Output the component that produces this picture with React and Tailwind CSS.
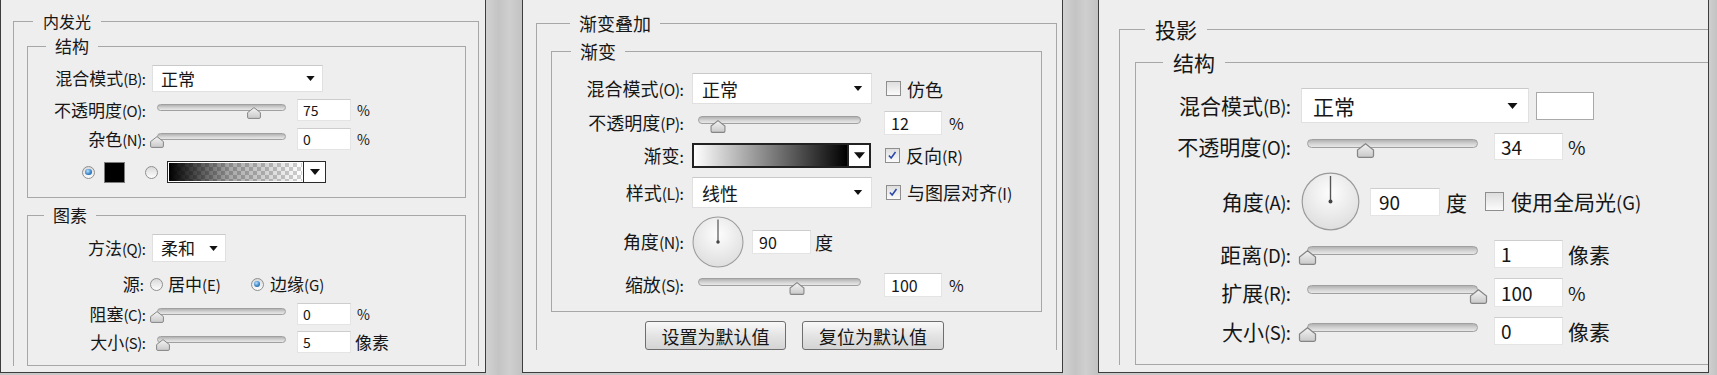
import React from "react";

const FONT = "font-['Noto_Sans_CJK_SC','Noto_Sans',sans-serif]";

function Label({ zh, en, className }) {
  return (
    <span className={`shrink-0 whitespace-nowrap text-right ${className}`}>
      {zh}
      {en ? <span className="text-[0.88em] tracking-[-0.03em]">{en}</span> : null}
      <span className="text-[0.88em]">:</span>
    </span>
  );
}

function Tri({ className }) {
  return (
    <svg viewBox="0 0 10 6" className={className}>
      <path d="M0 0H10L5 6Z" fill="#111" />
    </svg>
  );
}

function Select({ value, className, triClass }) {
  return (
    <div
      className={`flex shrink-0 items-center justify-between border border-[#e0e0e0] border-t-[#c9c9c9] bg-white ${className}`}
    >
      <span>{value}</span>
      <Tri className={triClass} />
    </div>
  );
}

function Field({ value, className }) {
  return (
    <div
      className={`flex shrink-0 items-center border border-[#e4e4e4] border-t-[#cdcdcd] bg-white ${className}`}
    >
      {value}
    </div>
  );
}

// thumb centre sits on the track at pos %, so it hangs over both ends
function Slider({ className, pos, trackClass, thumbW, thumbH }) {
  return (
    <div className={`relative shrink-0 ${className}`}>
      <div
        className={`rounded-full border border-[#a0a0a0] bg-[linear-gradient(#b2b2b2,#d4d4d4_55%,#e8e8e8)] ${trackClass}`}
      />
      <svg
        viewBox="0 0 14 12"
        className="absolute"
        style={{
          width: thumbW,
          height: thumbH,
          left: `calc(${pos}% - ${thumbW / 2}px)`,
          top: "45%",
        }}
      >
        <defs>
          <linearGradient id="thumbFill" x1="0" y1="0" x2="0" y2="1">
            <stop offset="0" stopColor="#f4f4f4" />
            <stop offset="1" stopColor="#c9c9c9" />
          </linearGradient>
        </defs>
        <path
          d="M7 0.6L13.4 5.6V10.2Q13.4 11.4 12.2 11.4H1.8Q0.6 11.4 0.6 10.2V5.6Z"
          fill="url(#thumbFill)"
          stroke="#858585"
          strokeWidth="1"
        />
      </svg>
    </div>
  );
}

function Radio({ on, className }) {
  return (
    <span
      className={`flex shrink-0 items-center justify-center rounded-full border border-[#8f8f8f] bg-[linear-gradient(#d9d9d9,#fdfdfd)] ${className}`}
    >
      {on ? (
        <span className="h-[55%] w-[55%] rounded-full bg-[radial-gradient(circle_at_40%_35%,#b9e1ff,#3a86c8_55%,#1d4f86)]" />
      ) : null}
    </span>
  );
}

function Check({ on, className }) {
  return (
    <span
      className={`flex shrink-0 items-center justify-center border border-[#8e8e8e] bg-[linear-gradient(#dedede,#fbfbfb)] ${className}`}
    >
      {on ? (
        <svg viewBox="0 0 12 12" className="h-[80%] w-[80%]">
          <path d="M2.2 6.4L4.8 9.2L9.8 2.4" fill="none" stroke="#2b47a8" strokeWidth="1.8" />
        </svg>
      ) : null}
    </span>
  );
}

function Dial({ className }) {
  return (
    <svg viewBox="0 0 60 60" className={`shrink-0 ${className}`}>
      <defs>
        <radialGradient id="dialFill" cx="0.5" cy="0.35" r="0.7">
          <stop offset="0" stopColor="#fdfdfd" />
          <stop offset="1" stopColor="#dcdcdc" />
        </radialGradient>
      </defs>
      <circle cx="30" cy="30" r="28.8" fill="url(#dialFill)" stroke="#9a9a9a" strokeWidth="1.2" />
      <line x1="30" y1="30" x2="30" y2="4" stroke="#555" strokeWidth="1.4" />
      <circle cx="30" cy="30" r="2" fill="#444" />
    </svg>
  );
}

function GlowPanel() {
  return (
    <section className="h-[373px] w-[486px] shrink-0 overflow-hidden border-x border-b border-[#3d3d3d] bg-[#eeeeee] pt-[11px] text-[17px] leading-[20px]">
      <fieldset className="ml-[12px] w-[466px] border border-b-0 border-[#a7a7a7]">
        <legend className="ml-[19px] px-[10px] text-[16px] leading-[20px]">内发光</legend>

        <fieldset className="ml-[13px] mt-[5px] w-[439px] border border-[#a7a7a7] pb-[14px]">
          <legend className="ml-[18px] px-[9px] leading-[20px]">结构</legend>

          <div className="mt-[9px] flex h-[27px] items-center">
            <Label zh="混合模式" en="(B)" className="w-[118px]" />
            <Select value="正常" className="ml-[6px] h-[27px] w-[171px] pl-[8px] pr-[7px]" triClass="h-[5px] w-[9px]" />
          </div>

          <div className="mt-[7px] flex h-[22px] items-center">
            <Label zh="不透明度" en="(O)" className="w-[118px]" />
            <Slider className="ml-[11px] -mt-[5px] h-[7px] w-[129px]" trackClass="h-[7px]" pos={75} thumbW={14} thumbH={12} />
            <Field value="75" className="ml-[11px] h-[22px] w-[54px] pl-[5px] text-[14px]" />
            <span className="ml-[6px] text-[14px]">%</span>
          </div>

          <div className="mt-[7px] flex h-[22px] items-center">
            <Label zh="杂色" en="(N)" className="w-[118px]" />
            <Slider className="ml-[11px] -mt-[5px] h-[7px] w-[129px]" trackClass="h-[7px]" pos={0} thumbW={14} thumbH={12} />
            <Field value="0" className="ml-[11px] h-[22px] w-[54px] pl-[5px] text-[14px]" />
            <span className="ml-[6px] text-[14px]">%</span>
          </div>

          <div className="mt-[11px] flex h-[22px] items-center">
            <Radio on className="ml-[54px] h-[13px] w-[13px]" />
            <span className="ml-[9px] h-[21px] w-[21px] border border-[#7c7c7c] bg-black" />
            <Radio className="ml-[20px] h-[13px] w-[13px]" />
            <div className="ml-[9px] flex h-[22px] w-[159px] border border-[#2a2a2a]">
              <div className="flex-1 border border-white bg-[linear-gradient(to_right,#000,rgba(0,0,0,0.35)_45%,rgba(0,0,0,0)),conic-gradient(#cfcfcf_25%,#ffffff_0_50%,#cfcfcf_0_75%,#ffffff_0)] bg-[length:100%_100%,8px_8px]" />
              <div className="flex w-[22px] items-center justify-center border-l border-[#2a2a2a] bg-white">
                <Tri className="h-[6px] w-[10px]" />
              </div>
            </div>
          </div>
        </fieldset>

        <fieldset className="ml-[13px] mt-[7px] w-[439px] border border-[#a7a7a7] pb-[12px]">
          <legend className="ml-[16px] px-[9px] leading-[20px]">图素</legend>

          <div className="mt-[9px] flex h-[28px] items-center">
            <Label zh="方法" en="(Q)" className="w-[118px]" />
            <Select value="柔和" className="ml-[6px] h-[28px] w-[74px] pl-[8px] pr-[7px]" triClass="h-[5px] w-[9px]" />
          </div>

          <div className="mt-[12px] flex h-[20px] items-center">
            <Label zh="源" className="w-[116px]" />
            <Radio className="ml-[6px] h-[13px] w-[13px]" />
            <span className="ml-[5px]">
              居中<span className="text-[0.88em]">(E)</span>
            </span>
            <Radio on className="ml-[30px] h-[13px] w-[13px]" />
            <span className="ml-[6px]">
              边缘<span className="text-[0.88em]">(G)</span>
            </span>
          </div>

          <div className="mt-[9px] flex h-[22px] items-center">
            <Label zh="阻塞" en="(C)" className="w-[118px]" />
            <Slider className="ml-[11px] -mt-[5px] h-[7px] w-[129px]" trackClass="h-[7px]" pos={0} thumbW={14} thumbH={12} />
            <Field value="0" className="ml-[11px] h-[22px] w-[54px] pl-[5px] text-[14px]" />
            <span className="ml-[6px] text-[14px]">%</span>
          </div>

          <div className="mt-[6px] flex h-[22px] items-center">
            <Label zh="大小" en="(S)" className="w-[118px]" />
            <Slider className="ml-[11px] -mt-[5px] h-[7px] w-[129px]" trackClass="h-[7px]" pos={4.6} thumbW={14} thumbH={12} />
            <Field value="5" className="ml-[11px] h-[22px] w-[54px] pl-[5px] text-[14px]" />
            <span className="ml-[4px]">像素</span>
          </div>
        </fieldset>
      </fieldset>
    </section>
  );
}

function GradientPanel() {
  return (
    <section className="h-[373px] w-[541px] shrink-0 overflow-hidden border-x border-b border-[#3d3d3d] bg-[#eeeeee] pt-[13px] text-[18px] leading-[20px]">
      <fieldset className="ml-[13px] w-[521px] border border-b-0 border-[#a7a7a7]">
        <legend className="ml-[33px] px-[9px] leading-[20px]">渐变叠加</legend>

        <fieldset className="ml-[14px] mt-[8px] w-[491px] border border-[#a7a7a7] pb-[14px]">
          <legend className="ml-[19px] px-[9px] leading-[20px]">渐变</legend>

          <div className="mt-[12px] flex h-[31px] items-center">
            <Label zh="混合模式" en="(O)" className="w-[132px]" />
            <Select value="正常" className="ml-[8px] h-[31px] w-[180px] pl-[9px] pr-[8px]" triClass="h-[5px] w-[10px]" />
            <Check className="ml-[14px] h-[15px] w-[15px]" />
            <span className="ml-[6px]">仿色</span>
          </div>

          <div className="mt-[7px] flex h-[24px] items-center">
            <Label zh="不透明度" en="(P)" className="w-[132px]" />
            <Slider className="ml-[14px] -mt-[6px] h-[8px] w-[163px]" trackClass="h-[8px]" pos={12} thumbW={16} thumbH={13} />
            <Field value="12" className="ml-[23px] h-[24px] w-[58px] pl-[6px] text-[16px]" />
            <span className="ml-[7px] text-[16px]">%</span>
          </div>

          <div className="mt-[8px] flex h-[25px] items-center">
            <Label zh="渐变" className="w-[132px]" />
            <div className="ml-[8px] flex h-[25px] w-[179px] border-2 border-[#222]">
              <div className="flex-1 bg-[linear-gradient(to_right,#ffffff,#000000)]" />
              <div className="flex w-[22px] items-center justify-center border-l-2 border-[#222] bg-white">
                <Tri className="h-[7px] w-[11px]" />
              </div>
            </div>
            <Check on className="ml-[14px] h-[15px] w-[15px]" />
            <span className="ml-[6px]">
              反向<span className="text-[0.88em]">(R)</span>
            </span>
          </div>

          <div className="mt-[9px] flex h-[31px] items-center">
            <Label zh="样式" en="(L)" className="w-[132px]" />
            <Select value="线性" className="ml-[8px] h-[31px] w-[180px] pl-[9px] pr-[8px]" triClass="h-[5px] w-[10px]" />
            <Check on className="ml-[14px] h-[15px] w-[15px]" />
            <span className="ml-[6px]">
              与图层对齐<span className="text-[0.88em]">(I)</span>
            </span>
          </div>

          <div className="mt-[8px] flex h-[51px] items-center">
            <Label zh="角度" en="(N)" className="w-[132px]" />
            <Dial className="ml-[8px] h-[52px] w-[52px]" />
            <Field value="90" className="ml-[8px] h-[24px] w-[59px] pl-[6px] text-[16px]" />
            <span className="ml-[4px]">度</span>
          </div>

          <div className="mt-[6px] flex h-[24px] items-center">
            <Label zh="缩放" en="(S)" className="w-[132px]" />
            <Slider className="ml-[14px] -mt-[6px] h-[8px] w-[163px]" trackClass="h-[8px]" pos={61} thumbW={16} thumbH={13} />
            <Field value="100" className="ml-[23px] h-[24px] w-[58px] pl-[6px] text-[16px]" />
            <span className="ml-[7px] text-[16px]">%</span>
          </div>
        </fieldset>

        <div className="ml-[108px] mt-[9px] flex gap-[16px]">
          <button className="h-[29px] w-[141px] rounded-[3px] border border-[#6e6e6e] bg-[linear-gradient(#f8f8f8,#e4e4e4_50%,#d4d4d4)] text-[18px] leading-[20px]">
            设置为默认值
          </button>
          <button className="h-[29px] w-[142px] rounded-[3px] border border-[#6e6e6e] bg-[linear-gradient(#f8f8f8,#e4e4e4_50%,#d4d4d4)] text-[18px] leading-[20px]">
            复位为默认值
          </button>
        </div>
      </fieldset>
    </section>
  );
}

function ShadowPanel() {
  return (
    <section className="h-[373px] w-[611px] shrink-0 overflow-hidden border-x border-b border-[#3d3d3d] bg-[#eeeeee] pt-[17px] text-[21px] leading-[24px]">
      <fieldset className="ml-[20px] w-[640px] border border-b-0 border-[#a7a7a7]">
        <legend className="ml-[25px] px-[10px] leading-[24px]">投影</legend>

        <fieldset className="ml-[15px] mt-[9px] w-[620px] border border-[#a7a7a7] pb-[19px]">
          <legend className="ml-[27px] px-[10px] leading-[24px]">结构</legend>

          <div className="mt-[14px] flex h-[35px] items-center">
            <Label zh="混合模式" en="(B)" className="w-[155px]" />
            <Select value="正常" className="ml-[10px] h-[35px] w-[228px] pl-[11px] pr-[10px]" triClass="h-[6px] w-[11px]" />
            <span className="ml-[7px] h-[28px] w-[58px] border border-[#a9a9a9] bg-white" />
          </div>

          <div className="mt-[10px] flex h-[27px] items-center">
            <Label zh="不透明度" en="(O)" className="w-[155px]" />
            <Slider className="ml-[16px] -mt-[7px] h-[9px] w-[171px]" trackClass="h-[9px]" pos={34} thumbW={19} thumbH={15} />
            <Field value="34" className="ml-[16px] h-[27px] w-[69px] pl-[6px] text-[19px]" />
            <span className="ml-[5px] text-[19px]">%</span>
          </div>

          <div className="mt-[12px] flex h-[59px] items-center">
            <Label zh="角度" en="(A)" className="w-[155px]" />
            <Dial className="ml-[10px] h-[59px] w-[59px]" />
            <Field value="90" className="ml-[10px] h-[28px] w-[70px] pl-[8px] text-[19px]" />
            <span className="ml-[6px]">度</span>
            <Check className="ml-[18px] h-[19px] w-[19px]" />
            <span className="ml-[7px]">
              使用全局光<span className="text-[0.88em]">(G)</span>
            </span>
          </div>

          <div className="mt-[9px] flex h-[28px] items-center">
            <Label zh="距离" en="(D)" className="w-[155px]" />
            <Slider className="ml-[16px] -mt-[7px] h-[9px] w-[171px]" trackClass="h-[9px]" pos={0} thumbW={19} thumbH={15} />
            <Field value="1" className="ml-[16px] h-[28px] w-[69px] pl-[6px] text-[19px]" />
            <span className="ml-[5px]">像素</span>
          </div>

          <div className="mt-[10px] flex h-[29px] items-center">
            <Label zh="扩展" en="(R)" className="w-[155px]" />
            <Slider className="ml-[16px] -mt-[7px] h-[9px] w-[171px]" trackClass="h-[9px]" pos={100} thumbW={19} thumbH={15} />
            <Field value="100" className="ml-[16px] h-[29px] w-[69px] pl-[6px] text-[19px]" />
            <span className="ml-[5px] text-[19px]">%</span>
          </div>

          <div className="mt-[10px] flex h-[28px] items-center">
            <Label zh="大小" en="(S)" className="w-[155px]" />
            <Slider className="ml-[16px] -mt-[7px] h-[9px] w-[171px]" trackClass="h-[9px]" pos={0} thumbW={19} thumbH={15} />
            <Field value="0" className="ml-[16px] h-[28px] w-[69px] pl-[6px] text-[19px]" />
            <span className="ml-[5px]">像素</span>
          </div>
        </fieldset>
      </fieldset>
    </section>
  );
}

export default function App() {
  return (
    <div className={`flex h-[375px] w-[1717px] items-start overflow-hidden bg-[#c8c8c8] text-[#161616] ${FONT}`}>
      <GlowPanel />
      <div className="h-[375px] w-[36px] shrink-0 bg-[linear-gradient(to_right,#d2d2d2,#c4c4c4_35%,#cfcfcf_65%,#c2c2c2)]" />
      <GradientPanel />
      <div className="h-[375px] w-[35px] shrink-0 bg-[linear-gradient(to_right,#d2d2d2,#c4c4c4_35%,#cfcfcf_65%,#c2c2c2)]" />
      <ShadowPanel />
      <div className="h-[375px] w-[8px] shrink-0 bg-[linear-gradient(to_right,#cfcfcf,#c3c3c3)]" />
    </div>
  );
}
